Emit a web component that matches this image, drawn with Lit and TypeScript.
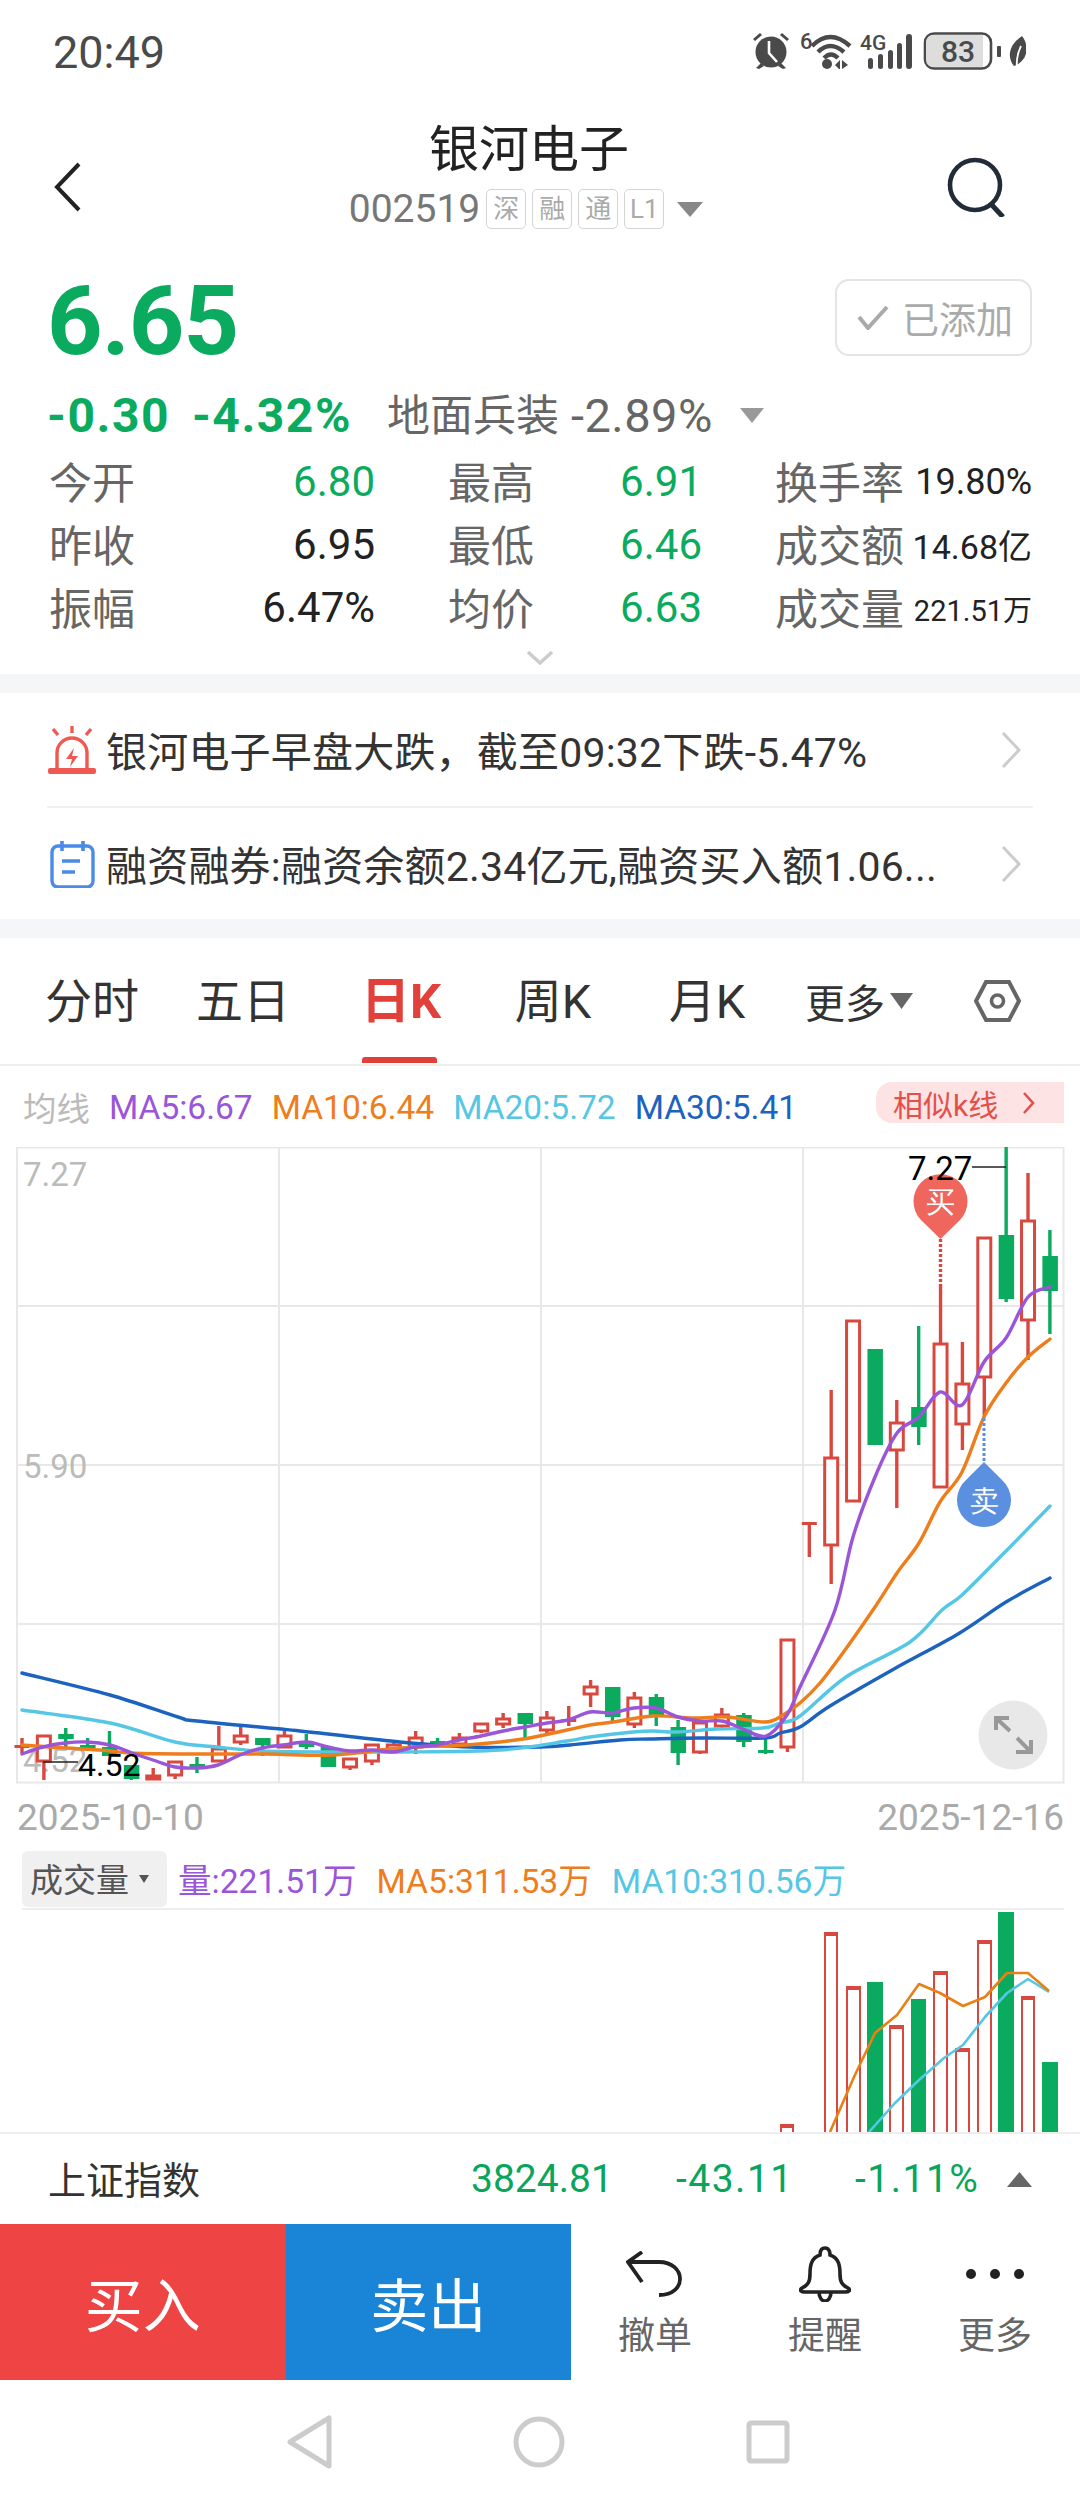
import { LitElement, html, css, svg } from "lit";
import { customElement } from "lit/decorators.js";

type C = [number, boolean, number, number, number, number]; // index, red, wickTop, bodyTop, bodyBottom, wickBottom
const RED = "#d9483f";
const GREEN = "#0aab5e";
const candles: C[] = [
  [0, true, 1738, 1745, 1747, 1753],
  [1, true, 1735, 1735, 1762, 1780],
  [2, false, 1728, 1734, 1739, 1747],
  [3, false, 1738, 1745, 1747, 1750],
  [4, false, 1731, 1747, 1756, 1756],
  [5, false, 1765, 1765, 1779, 1780],
  [6, true, 1768, 1775, 1780, 1780],
  [7, true, 1761, 1761, 1776, 1779],
  [8, false, 1757, 1764, 1767, 1773],
  [9, true, 1726, 1748, 1762, 1762],
  [10, true, 1727, 1735, 1743, 1745],
  [11, false, 1738, 1738, 1745, 1756],
  [12, true, 1731, 1735, 1748, 1748],
  [13, false, 1734, 1744, 1746, 1749],
  [14, false, 1747, 1747, 1767, 1767],
  [15, true, 1758, 1758, 1768, 1770],
  [16, true, 1744, 1744, 1762, 1765],
  [17, true, 1743, 1744, 1750, 1753],
  [18, true, 1731, 1737, 1748, 1754],
  [19, false, 1738, 1741, 1744, 1746],
  [20, true, 1733, 1737, 1745, 1746],
  [21, true, 1723, 1723, 1732, 1733],
  [22, true, 1713, 1718, 1725, 1728],
  [23, false, 1713, 1713, 1724, 1738],
  [24, true, 1711, 1717, 1731, 1733],
  [25, true, 1706, 1719, 1721, 1726],
  [26, true, 1680, 1686, 1695, 1707],
  [27, false, 1687, 1687, 1717, 1721],
  [28, true, 1692, 1697, 1725, 1728],
  [29, false, 1694, 1697, 1715, 1726],
  [30, false, 1720, 1727, 1753, 1765],
  [31, true, 1722, 1722, 1753, 1754],
  [32, true, 1708, 1714, 1727, 1728],
  [33, false, 1713, 1715, 1742, 1747],
  [34, false, 1737, 1750, 1753, 1754],
  [35, true, 1639, 1639, 1748, 1752],
  [36, true, 1522, 1522, 1524, 1557],
  [37, true, 1390, 1457, 1546, 1584],
  [38, true, 1320, 1320, 1502, 1502],
  [39, false, 1349, 1349, 1445, 1445],
  [40, true, 1400, 1422, 1451, 1508],
  [41, false, 1326, 1407, 1427, 1445],
  [42, true, 1286, 1343, 1488, 1488],
  [43, true, 1342, 1383, 1425, 1450],
  [44, true, 1237, 1237, 1378, 1417],
  [45, false, 1147, 1235, 1299, 1302],
  [46, true, 1173, 1220, 1321, 1360],
  [47, false, 1230, 1256, 1291, 1334],
];
const cx = (i: number) => 22 + 21.87 * i;

const ma30 = "22,1673 110,1695 178,1717 197,1721 300,1731 400,1742 470,1747 540,1747 570,1745 620,1740 650,1739 700,1738 765,1738 780,1733 800,1727 830,1706 894,1669 958,1634 1006,1602 1050,1578";
const ma20 = "22,1710 110,1723 175,1742 217,1747 262,1751 330,1752 400,1752 500,1750 567,1741 590,1737 633,1732 653,1731 677,1732 717,1729 763,1728 780,1723 800,1716 846,1677 910,1642 942,1610 962,1595 1005,1552 1050,1506";
const ma10 = "22,1745 50,1747 100,1750 130,1753 187,1754 267,1754 333,1755 400,1748 467,1745 523,1739 567,1730 590,1725 613,1722 653,1716 693,1718 727,1717 765,1722 783,1715 800,1703 820,1683 845,1650 875,1607 897,1573 919,1543 940,1502 962,1472 984,1417 1006,1383 1028,1357 1050,1339";
const ma5 = "22,1754 43,1747 65,1743 87,1742 110,1745 132,1753 153,1760 175,1767 197,1768 218,1765 240,1755 262,1748 283,1745 307,1742 328,1747 350,1751 372,1750 393,1752 415,1747 437,1745 459,1740 481,1736 503,1731 525,1727 547,1723 568,1720 590,1712 612,1713 634,1708 656,1708 678,1717 700,1721 722,1721 743,1729 766,1736 787,1715 800,1687 835,1610 853,1537 875,1477 897,1433 919,1417 940,1392 962,1405 984,1362 1006,1338 1028,1297 1050,1287";

// Catmull-Rom spline through the sampled points, for the smooth average lines.
function smooth(points: string): string {
  const p = points.split(" ").map((s) => s.split(",").map(Number));
  let d = `M${p[0][0]} ${p[0][1]}`;
  for (let i = 0; i < p.length - 1; i++) {
    const a = p[Math.max(0, i - 1)], b = p[i], c = p[i + 1], e = p[Math.min(p.length - 1, i + 2)];
    const c1x = b[0] + (c[0] - a[0]) / 6, c1y = b[1] + (c[1] - a[1]) / 6;
    const c2x = c[0] - (e[0] - b[0]) / 6, c2y = c[1] - (e[1] - b[1]) / 6;
    d += `C${c1x.toFixed(1)} ${c1y.toFixed(1)} ${c2x.toFixed(1)} ${c2y.toFixed(1)} ${c[0]} ${c[1]}`;
  }
  return d;
}

const vols: [number, boolean, number, number][] = [
  [780, true, 14, 2124], [824, true, 14, 1932], [846, true, 15, 1986], [867, false, 16, 1982],
  [889, true, 15, 2025], [911, false, 15, 1999], [933, true, 15, 1971], [955, true, 15, 2048],
  [977, true, 15, 1940], [998, false, 16, 1912], [1021, true, 14, 1996], [1042, false, 16, 2062],
];
const volMa5 = "830,2132 854,2077 875,2033 897,2015 919,1984 940,1993 963,2006 985,1997 1007,1973 1028,1973 1049,1991";
const volMa10 = "869,2132 895,2103 919,2080 944,2058 963,2045 985,2017 1007,1993 1028,1979 1049,1992";

@customElement("app-root")
export class AppRoot extends LitElement {
  static styles = css`
    :host { display: block; width: 1080px; height: 2504px; overflow: hidden; background: #fff;
      font-family: Roboto, "Noto Sans CJK SC", sans-serif; color: #333; }
    svg { display: block; }
    .status { height: 104px; display: flex; align-items: center; padding: 0 54px 0 53px; justify-content: space-between; color: #4a4a4a; }
    .time { font-size: 45px; line-height: 1; }
    .status text { font-family: Roboto, sans-serif; font-weight: 500; fill: #4a4a4a; }
    .nav { height: 146px; display: flex; padding: 0 73px 0 54px; box-sizing: border-box; }
    .back { width: 27px; height: 50px; margin-top: 58px; flex: none; }
    .search { width: 60px; height: 60px; margin-top: 53px; flex: none; }
    .title { flex: 1; padding-left: 30px; display: flex; flex-direction: column; align-items: center; padding-top: 16px; }
    .name { font-size: 50px; line-height: 60px; color: #222; }
    .code { display: flex; align-items: center; height: 40px; margin: 9px 6px 0 0; color: #777; font-size: 39px; gap: 6px; }
    .tag { width: 38px; height: 38px; border: 1px solid #d4d4d4; border-radius: 5px; font-size: 26px; color: #aaa; display: flex; align-items: center; justify-content: center; line-height: 1; }
    .code .drop { width: 26px; height: 15px; margin: 0 0 0 7px; }
    .price-row { display: flex; justify-content: space-between; align-items: center; padding: 29px 48px 0 47px; height: 77px; }
    .price { font-size: 97px; font-weight: 700; color: #0aab5e; line-height: 77px; letter-spacing: -1px; position: relative; top: 4px; }
    .added { width: 197px; height: 77px; box-sizing: border-box; border: 2px solid #e4e4e4; border-radius: 14px; display: flex; align-items: center; padding-left: 20px; gap: 13px; color: #aaa; font-size: 37px; }
    .change { display: flex; align-items: center; height: 44px; margin-top: 37px; padding-left: 47px; }
    .change b { font-size: 48px; font-weight: 700; color: #0aab5e; letter-spacing: 1.5px; margin-right: 22px; }
    .change .sector { font-size: 43px; color: #666; margin-left: 13px; position: relative; top: -3px; }
    .change .sv { font-size: 47px; color: #666; margin-left: 12px; letter-spacing: 0.5px; }
    .change svg { margin-left: 27px; }
    .stats { display: grid; grid-template-columns: 326px 254px 257px; column-gap: 73px; grid-auto-rows: 63px; padding: 13px 48px 0 49px; }
    .cell { display: flex; justify-content: space-between; align-items: center; }
    .cell label { font-size: 43px; color: #666; position: relative; top: -2px; }
    .cell span { font-size: 42px; color: #222; }
    .cell span.g { color: #0aab5e; }
    .more { display: flex; justify-content: center; height: 35px; padding-top: 12px; box-sizing: border-box; }
    .sep { height: 19px; background: #f5f6f8; }
    .notice { height: 113px; display: flex; align-items: center; padding: 0 59px 0 47px; font-size: 41px; color: #333; }
    .notice.b { height: 111px; }
    .notice .ic { flex: none; width: 50px; margin-right: 9px; }
    .notice .t { flex: 1; white-space: nowrap; letter-spacing: 0.2px; position: relative; top: -1px; }
    .rule { height: 2px; background: #f0f0f0; margin: 0 47px; }
    .tabs { height: 126px; display: grid; grid-template-columns: 152px 150px 166px 138px 170px auto 1fr; padding-left: 16px; align-items: center; border-bottom: 2px solid #eee; font-size: 47px; color: #333; }
    .tab { position: relative; height: 100%; display: flex; align-items: center; justify-content: center; line-height: 1; }
    .tab.on { color: #e2403a; font-weight: 700; font-size: 49px; }
    .tab.on::after { content: ""; position: absolute; left: 44px; width: 75px; bottom: 1px; height: 6px; background: #e0403a; border-radius: 3px 3px 0 0; }
    .tab-more { padding-left: 13px; display: flex; align-items: center; gap: 5px; font-size: 40px; }
    .hex { justify-self: start; margin-left: 61px; }
    .legend { height: 81px; display: flex; align-items: center; gap: 19px; padding: 1px 16px 0 23px; box-sizing: border-box; font-size: 33.5px; }
    .legend .l { color: #bbb; position: relative; top: -1px; }
    .pill { margin-left: auto; margin-bottom: 9px; width: 188px; height: 41px; box-sizing: border-box; background: #fde3e3; border-radius: 16px 0 0 16px; color: #e2504c; font-size: 30px; display: flex; align-items: center; padding-left: 17px; gap: 24px; }
    .dates { height: 66px; display: flex; justify-content: space-between; align-items: center; padding: 0 16px 0 17px; color: #aaa; font-size: 37px; }
    .vhead { height: 58px; margin: 0 16px 0 22px; border-bottom: 2px solid #eee; display: flex; align-items: center; font-size: 33.6px; gap: 20px; }
    .vhead > span { position: relative; top: -1px; }
    .vsel { width: 145px; height: 56px; margin-right: -9px; background: #f0f0f0; border-radius: 6px; display: flex; align-items: center; padding-left: 8px; box-sizing: border-box; gap: 10px; color: #555; font-size: 33px; }
    .vsel span { position: relative; top: -1px; }
    .vchart { border-bottom: 2px solid #eee; }
    .index { height: 90px; display: flex; align-items: center; padding: 0 47px 0 48px; font-size: 39px; color: #0aa55c; box-sizing: border-box; }
    .index .n { color: #333; font-size: 38px; width: 423px; position: relative; top: -2px; }
    .index .a { width: 205px; }
    .index .b { width: 179px; letter-spacing: 1.5px; }
    .index .c { width: 152px; letter-spacing: 1.5px; }
    .actions { height: 156px; display: flex; }
    .btn { width: 286px; display: flex; align-items: center; justify-content: center; color: #fff; font-size: 58px; }
    .buy { background: #ee4444; }
    .sell { background: #1a84d6; }
    .acts { display: flex; margin-left: -1px; }
    .act { width: 170px; display: flex; flex-direction: column; align-items: center; color: #666; font-size: 37px; line-height: 44px; }
    .act .i { height: 62px; margin-top: 19px; display: flex; align-items: center; justify-content: center; margin-bottom: 10px; }
    .sysnav { height: 124px; display: flex; align-items: center; padding-left: 285px; gap: 179px; }
  `;

  chart() {
    return svg`
      <g stroke="#e8e8e8" stroke-width="2" fill="none">
        <rect x="17" y="1147.5" width="1046.5" height="635" />
        <path d="M17 1306H1063M17 1465H1063M17 1624H1063M279 1147V1783M541 1147V1783M803 1147V1783" />
      </g>
      <g font-size="33" fill="#bbb"><text x="23" y="1186">7.27</text><text x="23" y="1478">5.90</text><text x="23" y="1772">4.52</text></g>
      ${candles.map(([i, red, wt, bt, bb, wb]) => {
        const x = cx(i);
        const col = red ? RED : GREEN;
        const thin = bb - bt < 5;
        return svg`
          ${red
            ? svg`<path d="M${x} ${wt}V${bt}M${x} ${bb}V${wb}" stroke=${col} stroke-width="3.4" />
                  ${thin ? svg`<rect x=${x - 7.5} y=${bt} width="15" height=${Math.max(bb - bt, 3)} fill=${col} />`
                         : svg`<rect x=${x - 6.5} y=${bt + 1} width="13" height=${bb - bt - 2} fill="#fff" stroke=${col} stroke-width="3" />`}`
            : svg`<path d="M${x} ${wt}V${wb}" stroke=${col} stroke-width="3.4" />
                  <rect x=${x - 7.5} y=${bt} width="15.5" height=${Math.max(bb - bt, 3)} fill=${col} />`}
        `;
      })}
      <g fill="none" stroke-width="3.4" stroke-linejoin="round" stroke-linecap="round">
        <path d=${smooth(ma30)} stroke="#1c62bf" />
        <path d=${smooth(ma20)} stroke="#55c7e4" />
        <path d=${smooth(ma10)} stroke="#ee7d1c" />
        <path d=${smooth(ma5)} stroke="#9a55d8" />
      </g>
      <path d="M940.5 1239V1286" stroke="#d9483f" stroke-width="3.4" stroke-dasharray="3 2" />
      <path d="M984 1418V1462" stroke="#5b8fe0" stroke-width="3" stroke-dasharray="3 2" />
      <path d="M940.5 1239L921 1220A27 27 0 1 1 960 1220Z" fill="#ee665c" />
      <path d="M984 1462L966 1480A27 27 0 1 0 1002 1480Z" fill="#5b8fe0" />
      <text x="940.5" y="1212" text-anchor="middle" font-size="29" fill="#fff">买</text>
      <text x="984" y="1511" text-anchor="middle" font-size="29" fill="#fff">卖</text>
      <text x="908" y="1180" font-size="33" fill="#000">7.27</text>
      <path d="M972 1167H1006M43 1762H78" stroke="#222" stroke-width="1.5" />
      <text x="78" y="1776" font-size="32" fill="#000">4.52</text>
      <circle cx="1013" cy="1735" r="34.5" fill="#e8e8e8" />
      <path d="M996 1730V1718H1009M996 1718L1010 1731M1031 1740V1752H1016M1031 1752L1017 1738" fill="none" stroke="#999" stroke-width="4" />
    `;
  }

  volume() {
    return svg`
      ${vols.map(([x, red, w, top]) => red
        ? svg`<rect x=${x + 1} y=${top + 1} width=${w - 2} height=${2140 - top} fill="#fff" stroke=${RED} stroke-width="2" />
              <rect x=${x} y=${top} width=${w} height="4" fill=${RED} />`
        : svg`<rect x=${x} y=${top} width=${w} height=${2140 - top} fill=${GREEN} />`)}
      <polyline points=${volMa10} fill="none" stroke="#55c7e4" stroke-width="2.6" stroke-linejoin="round" />
      <polyline points=${volMa5} fill="none" stroke="#e98016" stroke-width="2.6" stroke-linejoin="round" />
    `;
  }

  render() {
    const stat = (l: string, v: string, g: boolean, size?: number) => html`
      <div class="cell"><label>${l}</label><span class=${g ? "g" : ""} style=${size ? `font-size:${size}px` : ""}>${v}</span></div>`;
    return html`
      <div class="status">
        <span class="time">20:49</span>
        <svg width="274" height="44" viewBox="752 30 274 44">
          <g fill="#4a4a4a">
            <circle cx="771" cy="52" r="15.5" />
            <path d="M753 39L760 33L762 35L755 41ZM789 39L782 33L780 35L787 41ZM756 68L761 63L764 66L759 69ZM786 68L781 63L778 66L783 69Z" />
            <path d="M769 41V53L777 62" fill="none" stroke="#fff" stroke-width="2.6" />
            <text x="800" y="49" font-size="22">6</text>
            <path d="M812 46Q830 28 850 46" fill="none" stroke="#4a4a4a" stroke-width="4.4" />
            <path d="M818 52Q830 40 844 52" fill="none" stroke="#4a4a4a" stroke-width="4.4" />
            <path d="M824 58Q831 51 838 58" fill="none" stroke="#4a4a4a" stroke-width="4.4" />
            <circle cx="827" cy="64" r="5" />
            <path d="M835 65L840 60V69H839ZM842 60L848 65L842 69Z" />
            <text x="860" y="50" font-size="21">4G</text>
            <rect x="868" y="58" width="5" height="11" rx="2.5" />
            <rect x="878" y="54" width="5" height="15" rx="2.5" />
            <rect x="888" y="50" width="5" height="19" rx="2.5" />
            <rect x="897" y="43" width="5" height="26" rx="2.5" />
            <rect x="906" y="34" width="6" height="35" rx="3" />
            <rect x="925" y="33.5" width="66" height="35" rx="9" fill="#fff" stroke="#4a4a4a" stroke-width="2.6" />
            <path d="M934 35H983V67H934Q926 67 926 59V43Q926 35 934 35Z" fill="#ddd" />
            <text x="958" y="62" font-size="30" text-anchor="middle" font-weight="500">83</text>
            <rect x="997" y="46" width="4" height="11" rx="1" />
            <path d="M1022 36C1031 48 1026 62 1014 66C1006 56 1010 44 1022 36Z" />
            <path d="M1017 70C1016 60 1018 52 1021 46" fill="none" stroke="#fff" stroke-width="1.8" />
          </g>
        </svg>
      </div>

      <div class="nav">
        <svg class="back" viewBox="0 0 27 50"><path d="M25 2L3 25L25 48" fill="none" stroke="#222" stroke-width="4" /></svg>
        <div class="title">
          <div class="name">银河电子</div>
          <div class="code">
            <span>002519</span>
            <span class="tag">深</span><span class="tag">融</span><span class="tag">通</span><span class="tag">L1</span>
            <svg class="drop" viewBox="0 0 26 15"><path d="M0 0H26L13 15Z" fill="#888" /></svg>
          </div>
        </div>
        <svg class="search" viewBox="0 0 60 60"><circle cx="28" cy="28" r="25" fill="none" stroke="#222b38" stroke-width="4.6" /><path d="M44 47L56 60" stroke="#222b38" stroke-width="5" /></svg>
      </div>

      <div class="price-row">
        <span class="price">6.65</span>
        <div class="added">
          <svg width="32" height="25" viewBox="0 0 32 25"><path d="M2 12L11 23L30 2" fill="none" stroke="#aaa" stroke-width="4" /></svg>
          <span>已添加</span>
        </div>
      </div>

      <div class="change">
        <b>-0.30</b><b>-4.32%</b>
        <span class="sector">地面兵装</span><span class="sv">-2.89%</span>
        <svg width="24" height="15" viewBox="0 0 24 15"><path d="M0 0H24L12 15Z" fill="#999" /></svg>
      </div>

      <div class="stats">
        ${stat("今开", "6.80", true)}${stat("最高", "6.91", true)}${stat("换手率", "19.80%", false, 36)}
        ${stat("昨收", "6.95", false)}${stat("最低", "6.46", true)}${stat("成交额", "14.68亿", false, 34)}
        ${stat("振幅", "6.47%", false)}${stat("均价", "6.63", true)}${stat("成交量", "221.51万", false, 29)}
      </div>
      <div class="more"><svg width="26" height="14" viewBox="0 0 26 14"><path d="M1 1L13 12L25 1" fill="none" stroke="#ccc" stroke-width="3.4" /></svg></div>
      <div class="sep"></div>

      <div class="notice">
        <svg class="ic" height="48" viewBox="0 0 50 48">
          <g fill="none" stroke="#ee5a52" stroke-width="3.4">
            <path d="M10 44V27A15 15 0 0 1 40 27V44" />
            <path d="M25 0V7M6 3L11 9M44 3L39 9" />
          </g>
          <rect x="1" y="42" width="48" height="6" rx="2" fill="#ee5a52" />
          <path d="M27 22L19 33H25L23 41L31 30H25Z" fill="#ee5a52" />
        </svg>
        <span class="t">银河电子早盘大跌，截至09:32下跌-5.47%</span>
        <svg width="20" height="36" viewBox="0 0 20 36"><path d="M2 1L18 18L2 35" fill="none" stroke="#ccc" stroke-width="3" /></svg>
      </div>
      <div class="rule"></div>
      <div class="notice b">
        <svg class="ic" height="48" viewBox="0 0 50 48">
          <rect x="5" y="6" width="41" height="41" rx="6" fill="none" stroke="#4a8be8" stroke-width="3.4" />
          <path d="M15 1V11M36 1V11M15 21H33M15 32H28" stroke="#4a8be8" stroke-width="3.6" fill="none" />
        </svg>
        <span class="t">融资融券:融资余额2.34亿元,融资买入额1.06...</span>
        <svg width="20" height="36" viewBox="0 0 20 36"><path d="M2 1L18 18L2 35" fill="none" stroke="#ccc" stroke-width="3" /></svg>
      </div>
      <div class="sep"></div>

      <div class="tabs">
        <div class="tab">分时</div>
        <div class="tab">五日</div>
        <div class="tab on">日K</div>
        <div class="tab">周K</div>
        <div class="tab">月K</div>
        <div class="tab-more">更多<svg width="23" height="16" viewBox="0 0 23 16"><path d="M0 0H23L11.5 16Z" fill="#666" /></svg></div>
        <svg class="hex" width="47" height="42" viewBox="0 0 47 42"><path d="M12 2H35L45 21L35 40H12L2 21Z" fill="none" stroke="#666" stroke-width="4" /><circle cx="23.5" cy="21" r="6" fill="none" stroke="#666" stroke-width="3.6" /></svg>
      </div>

      <div class="legend">
        <span class="l">均线</span>
        <span style="color:#9a55d8">MA5:6.67</span>
        <span style="color:#ee7d1c">MA10:6.44</span>
        <span style="color:#55c7e4">MA20:5.72</span>
        <span style="color:#1c62bf">MA30:5.41</span>
        <div class="pill"><span>相似k线</span><svg width="13" height="22" viewBox="0 0 13 22"><path d="M2 1L11 11L2 21" fill="none" stroke="#e2504c" stroke-width="2.6" /></svg></div>
      </div>

      <svg width="1080" height="637" viewBox="0 1147 1080 637" font-family="Roboto, sans-serif">${this.chart()}</svg>

      <div class="dates"><span>2025-10-10</span><span>2025-12-16</span></div>

      <div class="vhead">
        <div class="vsel"><span>成交量</span><svg width="10" height="8" viewBox="0 0 10 8"><path d="M0 0H10L5 8Z" fill="#555" /></svg></div>
        <span style="color:#9a55d8">量:221.51万</span>
        <span style="color:#ee7d1c">MA5:311.53万</span>
        <span style="color:#55c7e4">MA10:310.56万</span>
      </div>

      <svg class="vchart" width="1080" height="222" viewBox="0 1910 1080 222">${this.volume()}</svg>

      <div class="index">
        <span class="n">上证指数</span>
        <span class="a">3824.81</span><span class="b">-43.11</span><span class="c">-1.11%</span>
        <svg width="25" height="15" viewBox="0 0 25 15"><path d="M0 15H25L12.5 0Z" fill="#666" /></svg>
      </div>

      <div class="actions">
        <div class="btn buy">买入</div>
        <div class="btn sell">卖出</div>
        <div class="acts">
          <div class="act"><div class="i"><svg width="58" height="46" viewBox="0 0 58 46"><path d="M16 1L2 11L16 31M2 11H33C60 11 62 44 33 44" fill="none" stroke="#222" stroke-width="3.8" /></svg></div>撤单</div>
          <div class="act"><div class="i"><svg width="52" height="56" viewBox="0 0 52 56"><path d="M26 2C21 2 21 8 21 9C12 12 11 20 11 28C11 36 9 39 3 42C0 44 2 46 6 46H46C50 46 52 44 49 42C43 39 41 36 41 28C41 20 40 12 31 9C31 8 31 2 26 2Z M20 46C20 58 32 58 32 46" fill="none" stroke="#222" stroke-width="3.6" /></svg></div>提醒</div>
          <div class="act"><div class="i"><svg width="58" height="10" viewBox="0 0 58 10"><circle cx="5" cy="5" r="5" fill="#222" /><circle cx="29" cy="5" r="5" fill="#222" /><circle cx="53" cy="5" r="5" fill="#222" /></svg></div>更多</div>
        </div>
      </div>

      <div class="sysnav">
        <svg width="48" height="54" viewBox="0 0 48 54"><path d="M44 3V51L5 27Z" fill="none" stroke="#ccc" stroke-width="5" stroke-linejoin="round" /></svg>
        <svg width="54" height="54" viewBox="0 0 54 54"><circle cx="27" cy="27" r="23" fill="none" stroke="#ccc" stroke-width="5" /></svg>
        <svg width="46" height="46" viewBox="0 0 46 46"><rect x="4" y="4" width="38" height="38" rx="2" fill="none" stroke="#ccc" stroke-width="5" /></svg>
      </div>
    `;
  }
}
